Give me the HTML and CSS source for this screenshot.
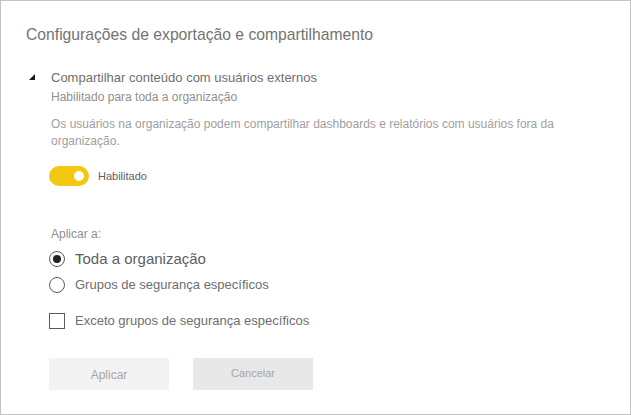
FILE: index.html
```html
<!DOCTYPE html>
<html lang="pt">
<head>
<meta charset="utf-8">
<link rel="stylesheet" href="styles.css">
</head>
<body>
<div class="panel">
  <h1 class="title">Configurações de exportação e compartilhamento</h1>
  <div class="section">
    <div class="section-head">
      <span class="caret"></span>
      <div class="head-text">
        <div class="setting-name">Compartilhar conteúdo com usuários externos</div>
        <div class="setting-status">Habilitado para toda a organização</div>
      </div>
    </div>
    <div class="body">
      <p class="desc">Os usuários na organização podem compartilhar dashboards e relatórios com usuários fora da organização.</p>
      <div class="toggle-row">
        <span class="toggle"><span class="knob"></span></span>
        <span class="toggle-label">Habilitado</span>
      </div>
      <div class="apply-label">Aplicar a:</div>
      <div class="radio-row">
        <span class="radio checked"></span>
        <span class="radio-text big">Toda a organização</span>
      </div>
      <div class="radio-row">
        <span class="radio"></span>
        <span class="radio-text">Grupos de segurança específicos</span>
      </div>
      <div class="check-row">
        <span class="checkbox"></span>
        <span class="radio-text">Exceto grupos de segurança específicos</span>
      </div>
      <div class="buttons">
        <button class="btn apply">Aplicar</button>
        <button class="btn cancel">Cancelar</button>
      </div>
    </div>
  </div>
</div>
</body>
</html>
```

FILE: styles.css
```css
html, body {
  margin: 0;
  padding: 0;
  background: #ffffff;
}
body {
  font-family: "Liberation Sans", Arial, sans-serif;
}
.panel {
  box-sizing: border-box;
  width: 631px;
  height: 415px;
  border: 1px solid #c3c3c3;
  padding: 0 0 0 25px;
}
.title {
  margin: 24px 0 0 0;
  font-size: 15.7px;
  font-weight: normal;
  color: #737373;
  line-height: 20px;
}
.section {
  margin-top: 24px;
}
.section-head {
  display: flex;
  align-items: flex-start;
}
.caret {
  width: 0;
  height: 0;
  margin: 5px 0 0 3px;
  border-left: 6px solid transparent;
  border-bottom: 6px solid #1a1a1a;
  flex: none;
}
.head-text {
  margin-left: 16px;
}
.setting-name {
  font-size: 13px;
  color: #6e6e6e;
  line-height: 18px;
}
.setting-status {
  font-size: 12px;
  color: #909090;
  line-height: 16px;
  margin-top: 2px;
}
.body {
  padding-left: 25px;
}
.desc {
  margin: 11px 0 0 0;
  font-size: 12px;
  line-height: 17px;
  color: #a0a0a0;
  width: 540px;
}
.toggle-row {
  display: flex;
  align-items: center;
  margin-top: 16px;
  margin-left: -2px;
}
.toggle {
  width: 40px;
  height: 20px;
  border-radius: 10px;
  background: #f2c811;
  position: relative;
  flex: none;
}
.knob {
  position: absolute;
  width: 10px;
  height: 10px;
  border-radius: 50%;
  background: #ffffff;
  top: 5px;
  left: 25px;
}
.toggle-label {
  margin-left: 9px;
  font-size: 11px;
  color: #5e5e5e;
}
.apply-label {
  margin-top: 40px;
  font-size: 12px;
  color: #8e8e8e;
  line-height: 16px;
}
.radio-row, .check-row {
  display: flex;
  align-items: center;
  margin-left: -2px;
}
.radio-row {
  margin-top: 9px;
}
.radio-row + .radio-row {
  margin-top: 10px;
}
.check-row {
  margin-top: 20px;
}
.radio {
  box-sizing: border-box;
  width: 16px;
  height: 16px;
  border: 1px solid #5a5a5a;
  border-radius: 50%;
  position: relative;
  flex: none;
}
.radio.checked::after {
  content: "";
  position: absolute;
  width: 8px;
  height: 8px;
  border-radius: 50%;
  background: #222222;
  top: 3px;
  left: 3px;
}
.checkbox {
  box-sizing: border-box;
  width: 16px;
  height: 16px;
  border: 1px solid #5a5a5a;
  flex: none;
}
.radio-text {
  margin-left: 10px;
  font-size: 13px;
  color: #6e6e6e;
  line-height: 16px;
}
.radio-text.big {
  font-size: 15px;
  color: #5e5e5e;
}
.buttons {
  display: flex;
  gap: 24px;
  margin-top: 29px;
  margin-left: -2px;
}
.btn {
  width: 120px;
  height: 32px;
  border: none;
  font-family: "Liberation Sans", Arial, sans-serif;
  font-size: 12px;
  color: #a6a6a6;
  padding: 0;
}
.btn.apply {
  background: #f3f3f3;
  padding-top: 2px;
}
.btn.cancel {
  background: #e8e8e8;
  font-size: 11px;
  padding-bottom: 3px;
}
```
